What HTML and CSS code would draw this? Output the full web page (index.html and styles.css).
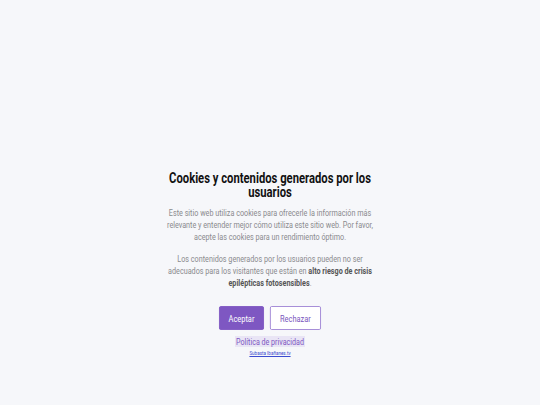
FILE: index.html
```html
<!DOCTYPE html>
<html lang="es">
<head>
<meta charset="utf-8">
<title>Cookies</title>
<link rel="stylesheet" href="styles.css">
</head>
<body>
<div class="page">
  <div class="dialog">
    <h1 class="title">Cookies y contenidos generados por los usuarios</h1>
    <p class="text">Este sitio web utiliza cookies para ofrecerle la información más relevante y entender mejor cómo utiliza este sitio web. Por favor, acepte las cookies para un rendimiento óptimo.</p>
    <p class="text text-second">Los contenidos generados por los usuarios pueden no ser adecuados para los visitantes que están en <strong>alto riesgo de crisis epilépticas fotosensibles</strong>.</p>
    <div class="actions">
      <button class="btn btn-primary">Aceptar</button>
      <button class="btn btn-outline">Rechazar</button>
    </div>
    <a class="privacy" href="#">Política de privacidad</a>
    <a class="site" href="#">Subasta Ibañanes.tv</a>
  </div>
</div>
</body>
</html>
```
FILE: styles.css
```css
html, body {
  margin: 0;
  padding: 0;
  background: #f6f7fa;
}
.page {
  height: 405px;
  overflow: hidden;
  font-family: "Roboto", sans-serif;
}
.dialog {
  width: 280px;
  margin: 0 auto;
  padding-top: 171px;
  display: flex;
  flex-direction: column;
  align-items: center;
  text-align: center;
  transform: scaleX(0.76);
  transform-origin: center top;
}
.title {
  margin: 0;
  font-size: 14.8px;
  line-height: 14px;
  font-weight: 700;
  color: #111;
}
.text {
  margin: 8px 0 0;
  font-size: 9.5px;
  line-height: 12px;
  color: #8a8a8e;
}
.text-second {
  margin-top: 10px;
}
.text strong {
  color: #555;
  font-weight: 700;
}
.actions {
  margin-top: 17px;
  display: flex;
  gap: 8px;
}
.btn {
  height: 24px;
  padding: 0;
  border-radius: 2px;
  font-family: inherit;
  font-size: 9.8px;
  cursor: pointer;
}
.btn-primary {
  background: #7e57c2;
  color: #fff;
  border: 1px solid #7e57c2;
  width: 59px;
}
.btn-outline {
  background: #fff;
  color: #7a56bd;
  border: 1px solid #9b7fd3;
  width: 67px;
}
.privacy {
  margin-top: 6px;
  font-size: 9.4px;
  line-height: 11px;
  color: #7e57c2;
  background: #e9e5f5;
  text-decoration: none;
  padding: 0 1px;
}
.site {
  margin-top: 2px;
  font-size: 6px;
  line-height: 7px;
  color: #3b4bd0;
  text-decoration: underline;
}
```
